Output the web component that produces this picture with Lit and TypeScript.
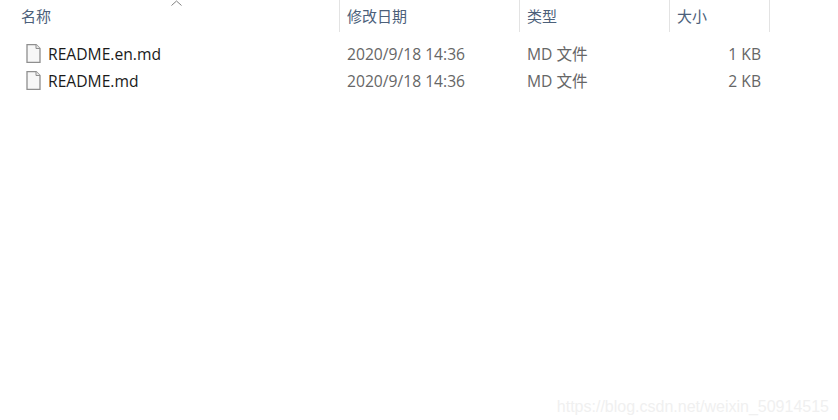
import { LitElement, html, css } from "lit";
import { customElement } from "lit/decorators.js";

const files = [
  { name: "README.en.md", date: "2020/9/18 14:36", type: "MD 文件", size: "1 KB" },
  { name: "README.md", date: "2020/9/18 14:36", type: "MD 文件", size: "2 KB" },
];

@customElement("app-root")
export class AppRoot extends LitElement {
  static styles = css`
    :host {
      display: block;
      position: relative;
      width: 838px;
      height: 420px;
      background: #fff;
      overflow: hidden;
      font-family: "Open Sans", "Noto Sans CJK SC", sans-serif;
      font-size: 15.65px;
    }
    .grid {
      display: grid;
      grid-template-columns: 340px 180px 150px 100px;
    }
    .head {
      height: 32px;
      color: #4c607a;
      font-family: "Noto Sans CJK SC", sans-serif;
      font-size: 15px;
    }
    .head > div {
      position: relative;
      display: flex;
      align-items: center;
      padding: 0 7px 2px 7px;
      border-right: 1px solid #e3e3e3;
      height: 32px;
      box-sizing: border-box;
    }
    .head > div:first-child {
      padding-left: 21px;
    }
    .caret {
      position: absolute;
      left: 170px;
      top: 0;
      width: 13px;
      height: 6px;
    }
    .rows {
      padding-top: 8px;
    }
    .row {
      height: 27px;
      color: #666;
      align-items: center;
    }
    .row > div {
      padding: 0 9px 0 7px;
      white-space: nowrap;
    }
    .row > .name {
      display: flex;
      align-items: center;
      gap: 7px;
      padding-left: 26px;
      color: #1a1a1a;
    }
    .row > .size {
      text-align: right;
    }
    svg {
      display: block;
    }
    .mark {
      position: absolute;
      right: 9px;
      bottom: 4px;
      font-family: "Liberation Sans", sans-serif;
      font-size: 16px;
      color: #f0f0f0;
    }
  `;

  render() {
    return html`
      <div class="grid head">
        <div>
          名称
          <svg class="caret" viewBox="0 0 13 6" fill="none" stroke="#808080" stroke-width="1">
            <path d="M1.5 5.5 L6.5 1 L11.5 5.5" />
          </svg>
        </div>
        <div>修改日期</div>
        <div>类型</div>
        <div>大小</div>
      </div>
      <div class="rows">
        ${files.map(
          (f) => html`
            <div class="grid row">
              <div class="name">
                <svg width="15" height="19" viewBox="0 0 15 19">
                  <path d="M1 .5 H10 L14 4.5 V18.5 H1 Z" fill="#f7f7f7" stroke="#8f8f8f" stroke-width="1.3" />
                  <path d="M10 .5 V4.5 H14" fill="#e8e8e8" stroke="#8f8f8f" />
                </svg>
                <span>${f.name}</span>
              </div>
              <div>${f.date}</div>
              <div>${f.type}</div>
              <div class="size">${f.size}</div>
            </div>
          `
        )}
      </div>
      <div class="mark">https://blog.csdn.net/weixin_50914515</div>
    `;
  }
}
